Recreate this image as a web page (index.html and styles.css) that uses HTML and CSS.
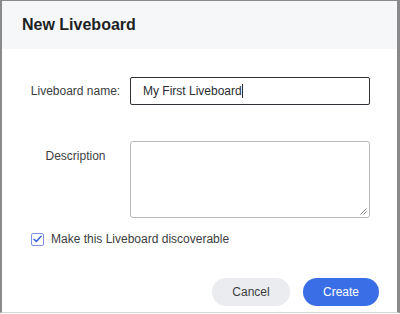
FILE: index.html
```html
<!DOCTYPE html>
<html lang="en">
<head>
    <meta charset="UTF-8">
    <meta name="viewport" content="width=device-width, initial-scale=1.0">
    <title>New Liveboard</title>
    <link rel="stylesheet" href="styles.css">
</head>
<body>
    <div class="dialog">
        <div class="dialog-header">
            <h1>New Liveboard</h1>
        </div>

        <div class="dialog-body">
            <div class="field">
                <label class="field-label" for="name">Liveboard name:</label>
                <div class="text-input" id="name">My First Liveboard<span class="caret"></span></div>
            </div>

            <div class="field field-top">
                <label class="field-label" for="desc">Description</label>
                <div class="text-area" id="desc">
                    <svg class="grip" width="7" height="7" viewBox="0 0 7 7">
                        <path d="M6.5 0.5 L0.5 6.5 M6.5 3.5 L3.5 6.5" stroke="#888" stroke-width="1" fill="none"/>
                    </svg>
                </div>
            </div>

            <div class="check-row">
                <span class="checkbox">
                    <svg width="9" height="8" viewBox="0 0 9 8">
                        <path d="M1 4.2 L3.4 6.4 L8 1.2" stroke="#3a63d8" stroke-width="1.5" fill="none" stroke-linecap="round" stroke-linejoin="round"/>
                    </svg>
                </span>
                <span>Make this Liveboard discoverable</span>
            </div>
        </div>

        <div class="dialog-footer">
            <button class="btn btn-secondary">Cancel</button>
            <button class="btn btn-primary">Create</button>
        </div>
    </div>
</body>
</html>
```

FILE: styles.css
```css
* {
    box-sizing: border-box;
}

body {
    margin: 0;
    font-family: "Liberation Sans", Arial, sans-serif;
    color: #2b2d33;
    background-color: #fff;
}

.dialog {
    width: 400px;
    height: 313px;
    border-top: 1px solid #8a8a8a;
    border-left: 2px solid #8a8a8a;
    border-right: 3px solid #8a8a8a;
    border-bottom: 1px solid #d5d6d8;
    background-color: #fff;
    display: flex;
    flex-direction: column;
}

.dialog-header {
    height: 48px;
    background-color: #f6f7f9;
    padding: 0 0 0 20px;
    display: flex;
    align-items: center;
}

.dialog-header h1 {
    margin: 0;
    font-size: 16px;
    font-weight: bold;
    color: #1d1f24;
}

.dialog-body {
    padding: 28px 0 0 19px;
}

.field {
    display: flex;
    align-items: center;
}

.field-top {
    align-items: flex-start;
    margin-top: 36px;
}

.field-label {
    width: 109px;
    text-align: center;
    font-size: 12px;
    color: #3b3d42;
}

.field-top .field-label {
    padding-top: 8px;
}

.text-input {
    width: 240px;
    height: 28px;
    border: 1px solid #2e3036;
    border-radius: 2px;
    padding: 0 12px;
    font-size: 12px;
    line-height: 26px;
    color: #2b2d33;
}

.caret {
    display: inline-block;
    width: 1px;
    height: 14px;
    background-color: #2b2d33;
    vertical-align: -3px;
}

.text-area {
    position: relative;
    width: 240px;
    height: 77px;
    border: 1px solid #b6b8bc;
    border-radius: 3px;
}

.grip {
    position: absolute;
    right: 2px;
    bottom: 2px;
}

.check-row {
    display: flex;
    align-items: center;
    gap: 7px;
    margin: 14px 0 0 10px;
    font-size: 12px;
    color: #3b3d42;
}

.checkbox {
    width: 13px;
    height: 13px;
    border: 1px solid #7d8fe8;
    border-radius: 2px;
    display: flex;
    align-items: center;
    justify-content: center;
}

.dialog-footer {
    margin-top: auto;
    padding: 0 18px 6px 0;
    display: flex;
    justify-content: flex-end;
    gap: 13px;
}

.btn {
    height: 28px;
    border: none;
    border-radius: 14px;
    font-family: inherit;
    font-size: 12px;
    padding: 0;
}

.btn-secondary {
    width: 78px;
    background-color: #ebecef;
    color: #3b3d42;
}

.btn-primary {
    width: 76px;
    background-color: #3a6ee6;
    color: #fff;
}
```
